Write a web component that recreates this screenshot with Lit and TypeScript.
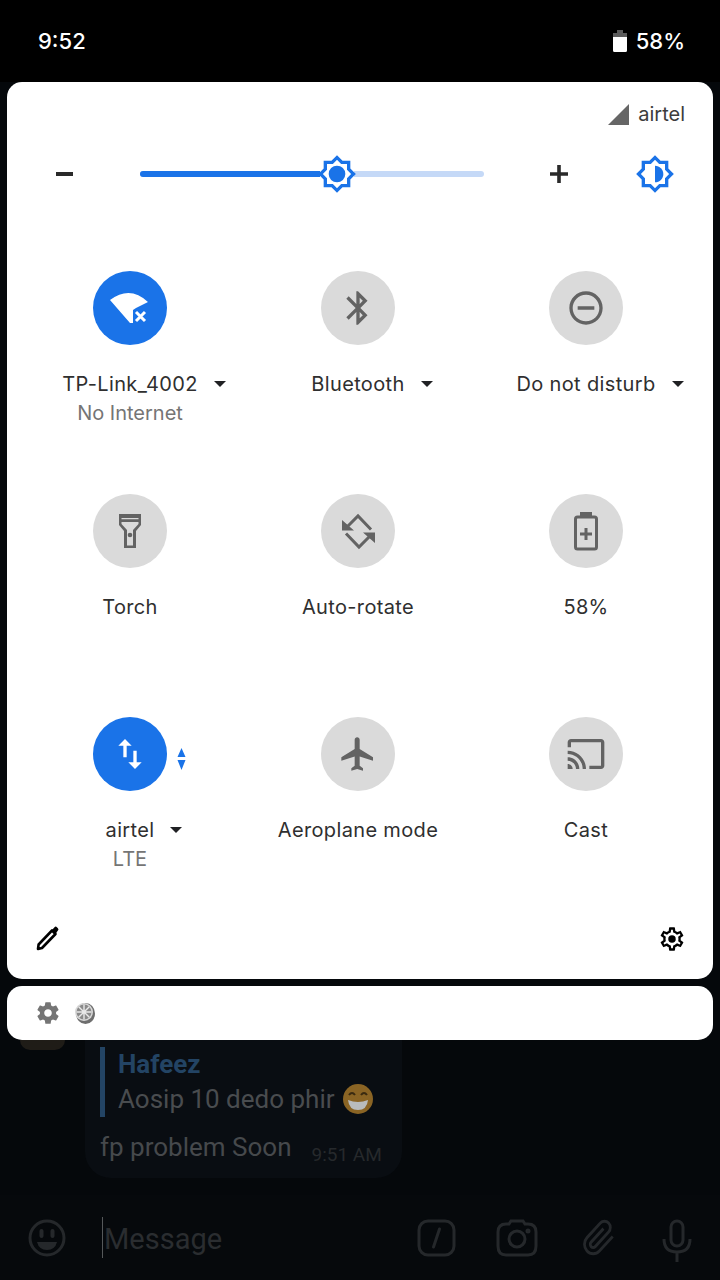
import { LitElement, html, css, svg } from "lit";
import { customElement, property } from "lit/decorators.js";

const GEAR_OUT = "M19.43 12.98c.04-.32.07-.64.07-.98 0-.34-.03-.66-.07-.98l2.11-1.65c.19-.15.24-.42.12-.64l-2-3.46c-.09-.16-.26-.25-.44-.25-.06 0-.12.01-.17.03l-2.49 1c-.52-.4-1.08-.73-1.69-.98l-.38-2.65C14.46 2.18 14.25 2 14 2h-4c-.25 0-.46.18-.49.42l-.38 2.65c-.61.25-1.17.59-1.69.98l-2.49-1c-.06-.02-.12-.03-.18-.03-.17 0-.34.09-.43.25l-2 3.46c-.13.22-.07.49.12.64l2.11 1.65c-.04.32-.07.65-.07.98 0 .33.03.66.07.98l-2.11 1.65c-.19.15-.24.42-.12.64l2 3.46c.09.16.26.25.44.25.06 0 .12-.01.17-.03l2.49-1c.52.4 1.08.73 1.69.98l.38 2.65c.03.24.24.42.49.42h4c.25 0 .46-.18.49-.42l.38-2.65c.61-.25 1.17-.59 1.69-.98l2.49 1c.06.02.12.03.18.03.17 0 .34-.09.43-.25l2-3.46c.12-.22.07-.49-.12-.64l-2.11-1.65zm-1.98-1.71c.04.31.05.52.05.73 0 .21-.02.43-.05.73l-.14 1.13.89.7 1.08.84-.7 1.21-1.27-.51-1.04-.42-.9.68c-.43.32-.84.56-1.25.73l-1.06.43-.16 1.13-.2 1.35h-1.4l-.19-1.35-.16-1.13-1.06-.43c-.43-.18-.83-.41-1.23-.71l-.91-.7-1.06.43-1.27.51-.7-1.21 1.08-.84.89-.7-.14-1.13c-.03-.31-.05-.54-.05-.74s.02-.43.05-.73l.14-1.13-.89-.7-1.08-.84.7-1.21 1.27.51 1.04.42.9-.68c.43-.32.84-.56 1.25-.73l1.06-.43.16-1.13.2-1.35h1.39l.19 1.35.16 1.13 1.06.43c.43.18.83.41 1.23.71l.91.7 1.06-.43 1.27-.51.7 1.21-1.07.85-.89.7.14 1.13z";
const GEAR_SOLID = "M19.43 12.98c.04-.32.07-.64.07-.98s-.03-.66-.07-.98l2.11-1.65c.19-.15.24-.42.12-.64l-2-3.46c-.12-.22-.39-.3-.61-.22l-2.49 1c-.52-.4-1.08-.73-1.69-.98l-.38-2.65C14.46 2.18 14.25 2 14 2h-4c-.25 0-.46.18-.49.42l-.38 2.65c-.61.25-1.17.59-1.69.98l-2.49-1c-.23-.09-.49 0-.61.22l-2 3.46c-.13.22-.07.49.12.64l2.11 1.65c-.04.32-.07.65-.07.98s.03.66.07.98l-2.11 1.65c-.19.15-.24.42-.12.64l2 3.46c.12.22.39.3.61.22l2.49-1c.52.4 1.08.73 1.69.98l.38 2.65c.03.24.24.42.49.42h4c.25 0 .46-.18.49-.42l.38-2.65c.61-.25 1.17-.59 1.69-.98l2.49 1c.23.09.49 0 .61-.22l2-3.46c.12-.22.07-.49-.12-.64l-2.11-1.65zM12 15.5c-1.93 0-3.5-1.57-3.5-3.5s1.57-3.5 3.5-3.5 3.5 1.57 3.5 3.5-1.57 3.5-3.5 3.5z";
const SUN = "M20 8.69V4h-4.69L12 .69 8.69 4H4v4.69L.69 12 4 15.31V20h4.69L12 23.31 15.31 20H20v-4.69L23.31 12 20 8.69zm-2 5.79V18h-3.52L12 20.48 9.52 18H6v-3.52L3.52 12 6 9.52V6h3.52L12 3.52 14.48 6H18v3.52L20.48 12 18 14.48z";

// Tile glyphs all share a 74x74 box laid over the round tile.
const m = (d: string) => svg`<g transform="translate(17 17) scale(1.667)"><path d=${d} /></g>`;

const ICONS: Record<string, unknown> = {
  wifi: svg`<path d="M17 29Q37 14 55 31L43 37 40 39V52H37Z" />
    <path d="M43 41l9 9M52 41l-9 9" fill="none" stroke="currentColor" stroke-width="3" />`,
  bluetooth: m("M17.71 7.71L12 2h-1v7.59L6.41 5 5 6.41 10.59 12 5 17.59 6.41 19 11 14.41V22h1l5.71-5.71-4.3-4.29 4.3-4.29zM13 5.83l1.88 1.88L13 9.59V5.83zm1.88 10.46L13 18.17v-3.76l1.88 1.88z"),
  dnd: m("M12 2C6.48 2 2 6.48 2 12s4.48 10 10 10 10-4.48 10-10S17.52 2 12 2zm0 18c-4.41 0-8-3.59-8-8s3.59-8 8-8 8 3.59 8 8-3.59 8-8 8zM7 11h10v2H7z"),
  torch: svg`<path fill-rule="evenodd" d="M26 20H48V31L43 37V54H31V37L26 31ZM28.500 24V25.200H45.500V24ZM28.500 28V30L34 36V51.500H40V36L45.500 30V28Z" />
    <circle cx="37" cy="41" r="2.300" />`,
  rotate: svg`<path d="M50 35.500L37 22 26 33M25 39.500L38 53 49 42" fill="none" stroke="currentColor" stroke-width="3" />
    <path d="M21 36.500V26L33 36.500ZM54 38.500V49L42 38.500Z" />`,
  battery: svg`<rect x="26.500" y="23" width="21" height="32" rx="2" fill="none" stroke="currentColor" stroke-width="3" />
    <path d="M31 18H43V23H31ZM35.500 34H38.500V38.500H43V41.500H38.500V46H35.500V41.500H31V38.500H35.500Z" />`,
  data: m("M16 17.01V10h-2v7.01h-3L15 21l4-3.99h-3zM9 3L5 6.99h3V14h2V6.99h3L9 3z"),
  plane: m("M21 16v-2l-8-5V3.500c0-.83-.67-1.500-1.500-1.500S10 2.670 10 3.500V9l-8 5v2l8-2.500V19l-2 1.500V22l3.500-1 3.500 1v-1.500L13 19v-5.500l8 2.500z"),
  cast: m("M21 3H3c-1.100 0-2 .9-2 2v3h2V5h18v14h-7v2h7c1.100 0 2-.9 2-2V5c0-1.100-.9-2-2-2zM1 18v3h3c0-1.660-1.340-3-3-3zm0-4v2c2.760 0 5 2.240 5 5h2c0-3.870-3.130-7-7-7zm0-4v2c4.970 0 9 4.030 9 9h2c0-6.080-4.930-11-11-11z"),
};

interface Tile { icon: string; label: string; sub?: string; on?: boolean; caret?: boolean; badge?: boolean; }

const TILES: Tile[] = [
  { icon: "wifi", label: "TP-Link_4002", sub: "No Internet", on: true, caret: true },
  { icon: "bluetooth", label: "Bluetooth", caret: true },
  { icon: "dnd", label: "Do not disturb", caret: true },
  { icon: "torch", label: "Torch" },
  { icon: "rotate", label: "Auto-rotate" },
  { icon: "battery", label: "58%" },
  { icon: "data", label: "airtel", sub: "LTE", on: true, caret: true, badge: true },
  { icon: "plane", label: "Aeroplane mode" },
  { icon: "cast", label: "Cast" },
];

@customElement("app-root")
export class AppRoot extends LitElement {
  @property({ type: Number }) brightness = 57.2;

  static styles = css`
    :host { display: block; width: 720px; height: 1280px; overflow: hidden; background: #05080b;
      font-family: Inter, "Liberation Sans", sans-serif; }
    .status { height: 82px; background: #000; color: #fff; display: flex; align-items: center;
      justify-content: space-between; padding: 0 35px 0 38px; box-sizing: border-box;
      font-size: 22px; font-weight: 500; }
    .status-right { display: flex; align-items: center; gap: 9px; }
    .panel { margin: 0 7px; height: 897px; box-sizing: border-box; background: #fff; border-radius: 15px;
      padding-top: 20px; color: #202124; }
    .carrier { height: 24px; display: flex; justify-content: flex-end; align-items: center; gap: 9px;
      padding-right: 28px; font-size: 20px; color: #3c3c3c; }
    .slider { height: 40px; margin-top: 28px; display: flex; align-items: center; padding-left: 49px; }
    .track { position: relative; width: 344px; height: 6px; margin: 0 66px 0 67px; border-radius: 3px; background: #c5d9f7; }
    .fill { height: 100%; border-radius: 3px; background: #1a73e8; }
    .thumb { position: absolute; top: 50%; width: 40px; height: 40px; transform: translate(-50%, -50%);
      background: radial-gradient(circle, #fff 60%, transparent 62%); }
    .sun { display: block; fill: #1a73e8; }
    .auto { margin-left: 67px; }
    .grid { margin: 77px 0 0 9px; display: grid; grid-template-columns: repeat(3, 228px);
      grid-auto-rows: 150px; row-gap: 73px; }
    .tile { display: flex; flex-direction: column; align-items: center; }
    .disc { position: relative; width: 74px; height: 74px; border-radius: 50%; background: #dadada; color: #636363; }
    .disc.on { background: #1a73e8; color: #fff; }
    .disc svg.glyph { display: block; fill: currentColor; }
    .updown { position: absolute; left: 84px; top: 31px; fill: #1a73e8; }
    .label { position: relative; margin-top: 26px; font-size: 20px; line-height: 26px; letter-spacing: 0.35px;
      white-space: nowrap; color: #2f2f2f; }
    .caret { position: absolute; left: 100%; top: 10px; margin-left: 16px; width: 0; height: 0;
      border-left: 6px solid transparent; border-right: 6px solid transparent; border-top: 6px solid #202124; }
    .sub { margin-top: 3px; font-size: 20px; line-height: 26px; color: #757575; }
    .foot { margin-top: 58px; display: flex; justify-content: space-between; padding: 0 27px 0 28px; }
    .foot svg { display: block; }
    .notif { margin: 7px 7px 0; height: 54px; background: #fff; border-radius: 15px; display: flex;
      align-items: center; padding-left: 28px; gap: 13px; }
    .notif svg { display: block; }
    .chat { display: flex; padding-left: 20px; height: 138px; }
    .avatar { width: 45px; height: 10px; border-radius: 0 0 22px 22px; background: #1f1c17; margin-right: 20px; }
    .bubble { width: 317px; height: 138px; box-sizing: border-box; background: #090d12; border-radius: 0 0 26px 26px;
      padding: 7px 0 0 15px; font-family: Roboto, sans-serif; }
    .reply { height: 70px; border-left: 5px solid #234464; padding-left: 13px; box-sizing: border-box; }
    .who { font-size: 26px; line-height: 34px; font-weight: 700; color: #234464; }
    .quote { font-size: 26px; line-height: 36px; color: #494c4f; display: flex; align-items: center; gap: 8px; }
    .last { display: flex; margin-top: 12px; }
    .msg { font-size: 26px; line-height: 36px; color: #46494c; }
    .time { margin: 15px 0 0 20px; font-size: 19px; line-height: 22px; color: #26292c; }
    .input { margin-top: 17px; height: 85px; background: #06090c; display: flex; align-items: flex-start;
      color: #25282b; font-family: Roboto, sans-serif; }
    .input svg { display: block; fill: none; stroke: currentColor; stroke-width: 3; }
    .smile { margin: 24px 0 0 28px; }
    .field { margin: 22px 0 0 36px; width: 315px; height: 41px; border-left: 1px solid #55585a; font-size: 29px;
      line-height: 45px; color: #2a2d30; padding-left: 1px; box-sizing: border-box; }
    .tools { display: flex; margin: 24px 0 0 0; gap: 40px; }
    .tools .clip { margin-left: 5px; }
    .tools .clip path { stroke-width: 1.900; }
    .tools .mic { margin-left: 7px; }
  `;

  private tile(t: Tile) {
    return html`<div class="tile">
      <div class="disc ${t.on ? "on" : ""}">
        <svg class="glyph" width="74" height="74" viewBox="0 0 74 74">${ICONS[t.icon]}</svg>
        ${t.badge
          ? html`<svg class="updown" width="9" height="22" viewBox="0 0 9 22"><path d="M4.500 0l4 9H.5zM.5 12h8l-4 10z" /></svg>`
          : null}
      </div>
      <div class="label">${t.label}${t.caret ? html`<span class="caret"></span>` : null}</div>
      ${t.sub ? html`<div class="sub">${t.sub}</div>` : null}
    </div>`;
  }

  render() {
    return html`
      <div class="status">
        <span>9:52</span>
        <span class="status-right">
          <svg width="14" height="22" viewBox="0 0 14 22">
            <path fill="#5c5c5c" d="M4 0h6v3h4v6H0V3h4z" />
            <path fill="#fff" d="M0 7h14v13.500a1.500 1.500 0 0 1-1.500 1.500h-11A1.500 1.500 0 0 1 0 20.500z" />
          </svg>
          <span>58%</span>
        </span>
      </div>

      <div class="panel">
        <div class="carrier">
          <svg width="21" height="21" viewBox="0 0 21 21"><path fill="#666" d="M0 21H21V0z" /></svg>
          <span>airtel</span>
        </div>
        <div class="slider">
          <svg width="17" height="4" viewBox="0 0 17 4"><rect width="17" height="4" fill="#2a2a2a" /></svg>
          <div class="track">
            <div class="fill" style="width:${this.brightness}%"></div>
            <div class="thumb" style="left:${this.brightness}%">
              <svg class="sun" width="40" height="40" viewBox="0 0 24 24"><path d=${SUN} /><circle cx="12" cy="12" r="5" /></svg>
            </div>
          </div>
          <svg width="18" height="18" viewBox="0 0 18 18"><path fill="#2a2a2a" d="M7.200 0h3.600v7.200H18v3.600h-7.200V18H7.200v-7.200H0V7.200h7.200z" /></svg>
          <svg class="sun auto" width="40" height="40" viewBox="0 0 24 24"><path d=${SUN} /><path d="M12 17c2.760 0 5-2.240 5-5s-2.240-5-5-5z" /></svg>
        </div>

        <div class="grid">${TILES.map((t) => this.tile(t))}</div>

        <div class="foot">
          <svg width="26" height="26" viewBox="0 0 26 26">
            <path d="M3 24l.6-4.500L17 5.500l3.500 3.500L7 23z" fill="none" stroke="#000" stroke-width="2.600" stroke-linejoin="round" />
            <path d="M17 5l2.500-2.800a1.700 1.700 0 0 1 2.400 0l1 1a1.700 1.700 0 0 1 0 2.400L20.500 9z" fill="#000" />
          </svg>
          <svg width="28" height="28" viewBox="0 0 24 24">
            <path d=${GEAR_OUT} fill="#000" /><circle cx="12" cy="12" r="3.200" fill="#000" />
          </svg>
        </div>
      </div>

      <div class="notif">
        <svg width="26" height="26" viewBox="0 0 24 24"><path d=${GEAR_SOLID} fill="#757575" /></svg>
        <svg width="22" height="24" viewBox="0 0 22 24">
          <ellipse cx="11.500" cy="12.500" rx="9.500" ry="10.500" fill="#6e6e6e" />
          <circle cx="10" cy="11" r="9" fill="#d8d8d8" />
          <circle cx="10" cy="11" r="7.500" fill="#8a8a8a" />
          <path d="M10 3.500v15M2.500 11h15M4.700 5.700l10.600 10.600M15.300 5.700L4.700 16.300" stroke="#e8e8e8" stroke-width="1.400" />
        </svg>
      </div>

      <div class="chat">
        <div class="avatar"></div>
        <div class="bubble">
          <div class="reply">
            <div class="who">Hafeez</div>
            <div class="quote">
              <span>Aosip 10 dedo phir</span>
              <svg width="30" height="30" viewBox="0 0 30 30">
                <circle cx="15" cy="15" r="15" fill="#8a6424" />
                <path d="M5 16Q15 20 25 16Q24 26 15 26Q6 26 5 16Z" fill="#b9bcbc" />
                <path d="M6 11q3-4 6 0M18 11q3-4 6 0" fill="none" stroke="#3a2a10" stroke-width="2" />
              </svg>
            </div>
          </div>
          <div class="last">
            <span class="msg">fp problem Soon</span>
            <span class="time">9:51 AM</span>
          </div>
        </div>
      </div>

      <div class="input">
        <svg class="smile" width="38" height="38" viewBox="0 0 38 38">
          <circle cx="19" cy="19" r="17" />
          <path d="M9 23H29Q27 31 19 31Q11 31 9 23Z" fill="currentColor" stroke="none" />
          <path d="M13.500 12v5M24.500 12v5" stroke-linecap="round" stroke-width="4" />
        </svg>
        <div class="field">Message</div>
        <div class="tools">
          <svg width="39" height="38" viewBox="0 0 39 38">
            <rect x="2" y="2" width="35" height="34" rx="9" />
            <path d="M22.500 10L16.500 28" stroke-linecap="round" />
          </svg>
          <svg width="42" height="38" viewBox="0 0 42 38">
            <path d="M13 5L15 2H27L29 5H32Q40 5 40 13V27Q40 36 32 36H10Q2 36 2 27V13Q2 5 10 5Z" />
            <circle cx="21" cy="20" r="8" />
            <circle cx="32" cy="12" r="1" fill="currentColor" />
          </svg>
          <svg class="clip" width="32" height="38" viewBox="1 0 22 24" preserveAspectRatio="none">
            <path d="M21.440 11.050l-9.190 9.190a6 6 0 0 1-8.490-8.490l9.190-9.190a4 4 0 0 1 5.660 5.660l-9.200 9.190a2 2 0 0 1-2.830-2.830l8.490-8.480" />
          </svg>
          <svg class="mic" width="30" height="44" viewBox="0 0 30 44">
            <rect x="9" y="2" width="12" height="25" rx="6" />
            <path d="M2 20Q2 33 15 33Q28 33 28 20M15 33V43" />
          </svg>
        </div>
      </div>
    `;
  }
}
